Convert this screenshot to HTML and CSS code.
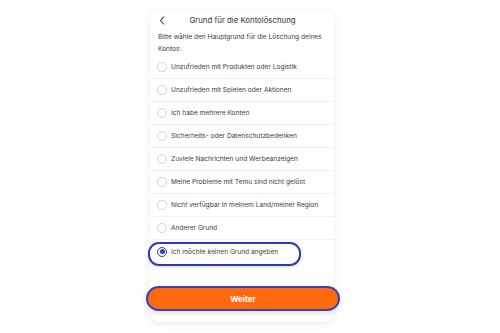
FILE: index.html
```html
<!DOCTYPE html>
<html lang="de">
<head>
<meta charset="utf-8">
<title>Grund für die Kontolöschung</title>
<link rel="stylesheet" href="styles.css">
</head>
<body>
<main class="stage">
  <section class="card">
    <header class="head">
      <span class="back">
        <svg width="6" height="9" viewBox="0 0 6 9"><path d="M4.5 1 L1.5 4.5 L4.5 8" fill="none" stroke="#333" stroke-width="1.1" stroke-linecap="round" stroke-linejoin="round"/></svg>
      </span>
      <h1 class="title">Grund für die Kontolöschung</h1>
    </header>
    <p class="desc">Bitte wähle den Hauptgrund für die Löschung deines Kontos:</p>
    <ul class="options">
      <li class="opt"><span class="radio"></span>Unzufrieden mit Produkten oder Logistik</li>
      <li class="opt"><span class="radio"></span>Unzufrieden mit Spielen oder Aktionen</li>
      <li class="opt"><span class="radio"></span>Ich habe mehrere Konten</li>
      <li class="opt"><span class="radio"></span>Sicherheits- oder Datenschutzbedenken</li>
      <li class="opt"><span class="radio"></span>Zuviele Nachrichten und Werbeanzeigen</li>
      <li class="opt"><span class="radio"></span>Meine Probleme mit Temu sind nicht gelöst</li>
      <li class="opt"><span class="radio"></span>Nicht verfügbar in meinem Land/meiner Region</li>
      <li class="opt"><span class="radio"></span>Anderer Grund</li>
      <li class="opt selected"><span class="radio on"></span>Ich möchte keinen Grund angeben</li>
    </ul>
    <button class="next">Weiter</button>
  </section>
</main>
</body>
</html>
```
FILE: styles.css
```css
* { box-sizing: border-box; }
html, body { margin: 0; padding: 0; background: #ffffff; }
body {
  width: 500px;
  height: 333px;
  overflow: hidden;
  font-family: Inter, "Noto Sans", "Liberation Sans", sans-serif;
  color: #2e2e2e;
}
.stage {
  display: flex;
  justify-content: flex-start;
  padding: 10px 0 0 150px;
}
.card {
  width: 184px;
  height: 312px;
  background: #fff;
  border-radius: 9px;
  box-shadow: 0 2px 8px rgba(0,0,0,0.08), 0 0 1px rgba(0,0,0,0.06);
  padding: 0 8px 11px 8px;
  display: flex;
  flex-direction: column;
}
.head {
  height: 20px;
  display: flex;
  align-items: center;
  position: relative;
}
.back { display: flex; align-items: center; padding-left: 1px; }
.title {
  flex: 1;
  margin: 0 0 0 -6px;
  text-align: center;
  font-size: 7.8px;
  font-weight: 400;
  color: #333;
}
.desc {
  margin: 0 -8px 0 0;
  padding: 1px 0 1px;
  font-size: 6.6px;
  line-height: 12px;
  color: #3a3a3a;
}
.options { list-style: none; margin: 0; padding: 0; }
.opt {
  height: 23px;
  display: flex;
  align-items: center;
  gap: 4px;
  font-size: 6.6px;
  white-space: nowrap;
  color: #3a3a3a;
  border-bottom: 1px solid #f0f0f0;
  margin: 0 -8px;
  padding: 0 8px 0 7px;
  position: relative;
}
.opt:last-child { border-bottom: none; }
.radio {
  width: 10px;
  height: 10px;
  border-radius: 50%;
  border: 1px solid #d2d2d2;
  flex: none;
  display: flex;
  align-items: center;
  justify-content: center;
}
.radio.on { border: 1px solid #2c3fc4; }
.radio.on::before {
  content: "";
  width: 5px;
  height: 5px;
  border-radius: 50%;
  background: #2c3fc4;
}
.selected::after {
  content: "";
  position: absolute;
  left: -2px;
  top: 2px;
  width: 149px;
  height: 20px;
  border: 2px solid #2e3bb8;
  border-radius: 11px;
  box-shadow: 0 1px 3px rgba(0,0,0,0.15);
}
.next {
  margin: 23px -14px 0 -12px;
  height: 25px;
  border-radius: 13px;
  background: #ff6a0d;
  border: 2px solid #3b3fb6;
  color: #fff;
  font-family: Inter, "Noto Sans", sans-serif;
  font-size: 8px;
  font-weight: 700;
  box-shadow: 0 2px 5px rgba(0,0,0,0.15);
}
```
